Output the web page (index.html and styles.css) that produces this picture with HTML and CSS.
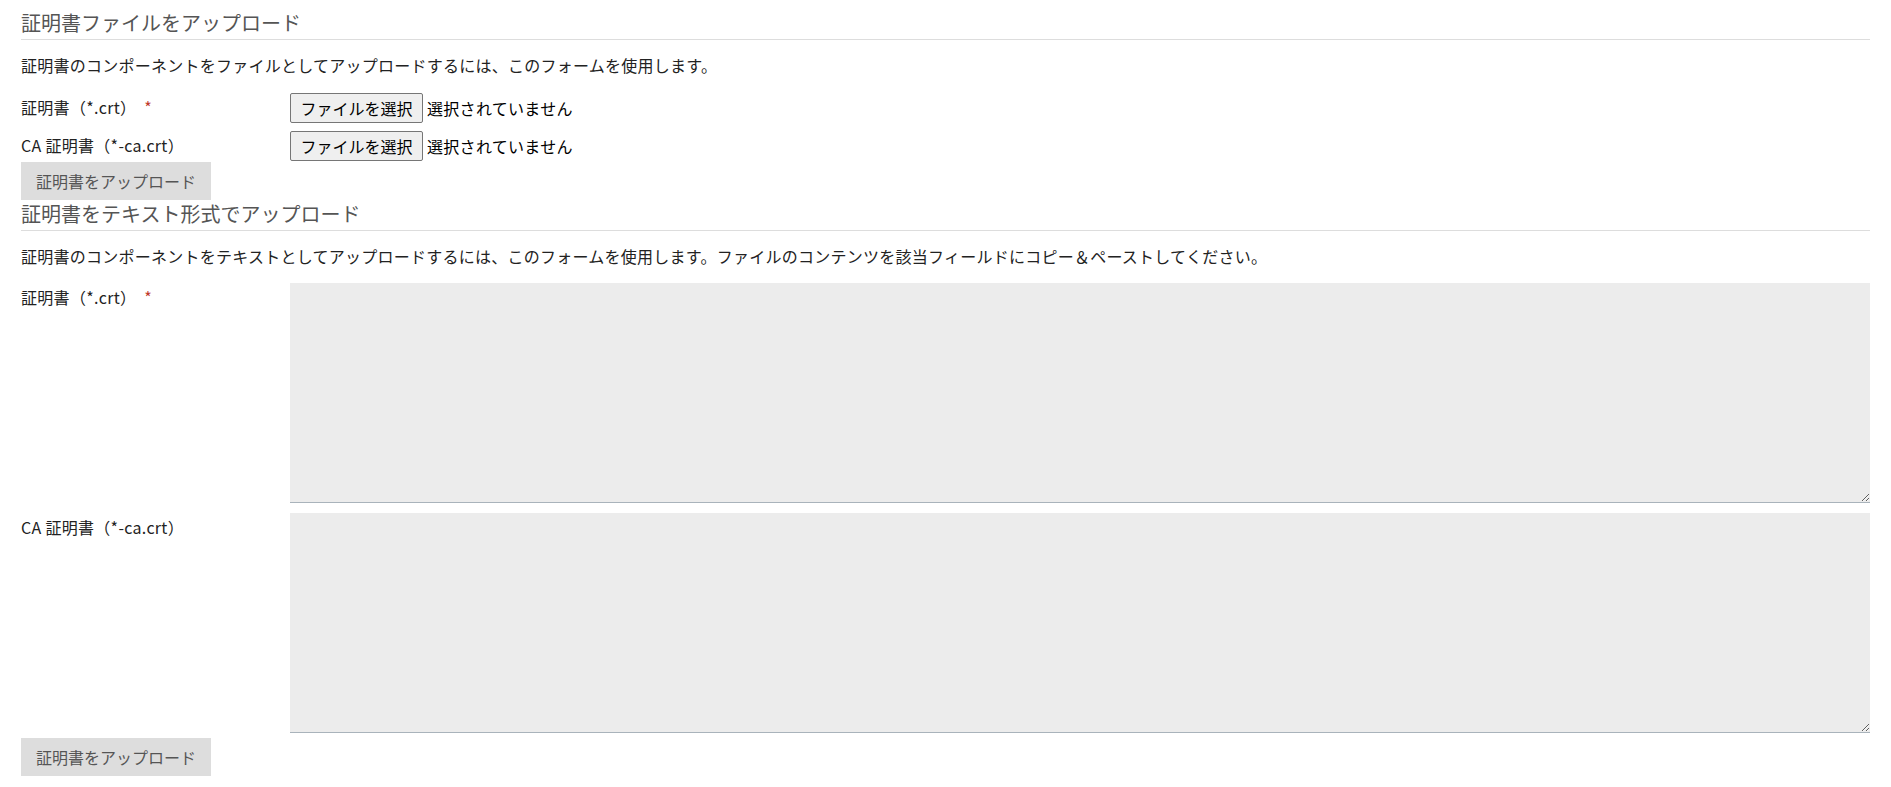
FILE: index.html
```html
<!DOCTYPE html>
<html lang="ja">
<head>
<meta charset="utf-8">
<title>証明書のアップロード</title>
<link rel="stylesheet" href="styles.css">
</head>
<body>
<div class="page">
  <section class="section">
    <h2 class="section-title">証明書ファイルをアップロード</h2>
    <p class="section-desc">証明書のコンポーネントをファイルとしてアップロードするには、このフォームを使用します。</p>
    <div class="form-grid file-grid">
      <label class="field-label">証明書（*.crt）<span class="req">*</span></label>
      <div class="file-field">
        <button type="button" class="file-btn">ファイルを選択</button>
        <span class="file-status">選択されていません</span>
      </div>
      <label class="field-label">CA 証明書（*-ca.crt）</label>
      <div class="file-field">
        <button type="button" class="file-btn">ファイルを選択</button>
        <span class="file-status">選択されていません</span>
      </div>
    </div>
    <button type="button" class="upload-btn upload-btn-file">証明書をアップロード</button>
  </section>

  <section class="section">
    <h2 class="section-title">証明書をテキスト形式でアップロード</h2>
    <p class="section-desc">証明書のコンポーネントをテキストとしてアップロードするには、このフォームを使用します。ファイルのコンテンツを該当フィールドにコピー＆ペーストしてください。</p>
    <div class="form-grid text-grid">
      <label class="field-label top-label">証明書（*.crt）<span class="req">*</span></label>
      <textarea class="cert-text"></textarea>
      <label class="field-label top-label">CA 証明書（*-ca.crt）</label>
      <textarea class="cert-text"></textarea>
    </div>
    <button type="button" class="upload-btn upload-btn-text">証明書をアップロード</button>
  </section>
</div>
</body>
</html>
```

FILE: styles.css
```css
html, body {
  margin: 0;
  padding: 0;
  background: #ffffff;
}

body {
  font-family: "Noto Sans CJK JP", "Noto Sans", sans-serif;
  font-size: 16px;
  color: #222222;
}

.page {
  padding: 9px 21px 0 21px;
}

.section-title {
  margin: 0;
  font-size: 20px;
  font-weight: 400;
  line-height: 28px;
  color: #555555;
  padding-bottom: 2px;
  border-bottom: 1px solid #dddddd;
}

.section-desc {
  margin: 13px 0 15px 0;
  font-size: 16px;
  line-height: 24px;
  letter-spacing: 0.25px;
  color: #222222;
}

.form-grid {
  display: grid;
  grid-template-columns: 269px 1fr;
}

.file-grid {
  row-gap: 8px;
  margin-top: 16px;
}

.text-grid {
  row-gap: 10px;
}

.field-label {
  font-size: 16px;
  line-height: 24px;
  letter-spacing: 0.3px;
  color: #222222;
  align-self: center;
  padding-bottom: 3px;
}

.top-label {
  align-self: start;
  padding-top: 2px;
  padding-bottom: 0;
}

.req {
  color: #c0392b;
  margin-left: 8px;
}

.file-field {
  display: flex;
  align-items: center;
}

.file-btn {
  height: 30px;
  width: 133px;
  padding: 0;
  margin: 0 4px 0 0;
  font-family: inherit;
  font-size: 16px;
  color: #000000;
  background: #efefef;
  border: 1px solid #767676;
  border-radius: 2px;
}

.file-status {
  font-size: 16px;
  line-height: 24px;
  letter-spacing: 0.3px;
  color: #000000;
}

.upload-btn {
  display: block;
  height: 38px;
  padding: 0 15px;
  font-family: inherit;
  font-size: 16px;
  color: #555555;
  background: #dddddd;
  border: none;
  border-radius: 0;
}

.upload-btn-file {
  margin-top: 1px;
}

.upload-btn-text {
  margin-top: 5px;
}

.cert-text {
  display: block;
  box-sizing: border-box;
  width: 100%;
  height: 220px;
  margin: 0;
  background: #ececec;
  border: none;
  border-bottom: 1px solid #a9b3bb;
  font-family: inherit;
  font-size: 16px;
}
```
